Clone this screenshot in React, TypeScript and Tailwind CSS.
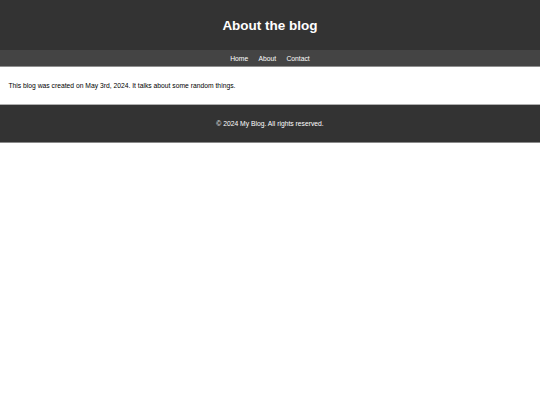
import React from 'react';

const links = ['Home', 'About', 'Contact'];

export default function App() {
  return (
    <div className="min-h-[405px] bg-white font-['Liberation_Sans',Arial,sans-serif] text-[6.75px]">
      <header className="flex h-[50px] items-center justify-center bg-[#333] text-white">
        <h1 className="pt-[1.5px] text-[13.5px] font-bold leading-none">About the blog</h1>
      </header>
      <nav className="flex h-[16px] items-center justify-center gap-[10.3px] bg-[#444] pt-[2.5px] text-white">
        {links.map((link) => (
          <a key={link} href="#" className="leading-none">
            {link}
          </a>
        ))}
      </nav>
      <div className="h-px bg-[#8f8f8f]" />
      <main className="flex h-[37px] items-center px-[8.4px] pt-[1.5px] text-black">
        <p className="leading-none">
          This blog was created on May 3rd, 2024. It talks about some random things.
        </p>
      </main>
      <div className="h-px bg-[#b0b0b0]" />
      <footer className="flex h-[37px] items-center justify-center bg-[#333] pt-[1.5px] text-white">
        <p className="leading-none">&copy; 2024 My Blog. All rights reserved.</p>
      </footer>
      <div className="h-px bg-[#8a8a8a]" />
    </div>
  );
}
